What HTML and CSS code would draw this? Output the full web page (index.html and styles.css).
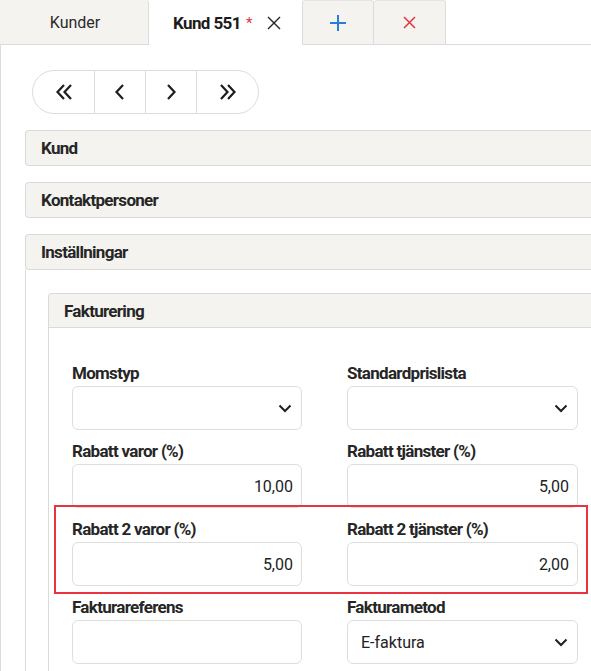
FILE: index.html
```html
<!DOCTYPE html>
<html lang="sv">
<head>
<meta charset="utf-8">
<title>Kund 551</title>
<link rel="stylesheet" href="styles.css">
</head>
<body>
<div class="tabs">
  <div class="tab tab-inactive tab-kunder">Kunder</div>
  <div class="tab tab-active">
    <span class="tab-title">Kund 551</span><span class="star">*</span>
    <svg class="tab-close" width="14" height="14" viewBox="0 0 14 14"><path d="M1 1L13 13M13 1L1 13" stroke="#222" stroke-width="1.4" fill="none"/></svg>
  </div>
  <div class="tab tab-inactive tab-icon">
    <svg width="18" height="18" viewBox="0 0 18 18"><path d="M9 1V17M1 9H17" stroke="#2b7bd8" stroke-width="2" fill="none"/></svg>
  </div>
  <div class="tab tab-inactive tab-icon">
    <svg width="13" height="13" viewBox="0 0 13 13"><path d="M1 1L12 12M12 1L1 12" stroke="#e5343c" stroke-width="1.5" fill="none"/></svg>
  </div>
  <div class="tab-fill"></div>
</div>

<div class="page">
  <div class="pager">
    <div class="pg pg-wide"><svg width="20" height="16" viewBox="0 0 20 16"><path d="M8 1L1.5 8L8 15M15 1L8.5 8L15 15" stroke="#1f1f1f" stroke-width="2.2" fill="none" stroke-linejoin="miter"/></svg></div>
    <div class="pg"><svg width="12" height="16" viewBox="0 0 12 16"><path d="M9 1L2.5 8L9 15" stroke="#1f1f1f" stroke-width="2.2" fill="none"/></svg></div>
    <div class="pg"><svg width="12" height="16" viewBox="0 0 12 16"><path d="M3 1L9.5 8L3 15" stroke="#1f1f1f" stroke-width="2.2" fill="none"/></svg></div>
    <div class="pg pg-wide"><svg width="20" height="16" viewBox="0 0 20 16"><path d="M5 1L11.5 8L5 15M12 1L18.5 8L12 15" stroke="#1f1f1f" stroke-width="2.2" fill="none"/></svg></div>
  </div>

  <div class="panel"><div class="panel-head">Kund</div></div>
  <div class="panel"><div class="panel-head">Kontaktpersoner</div></div>
  <div class="panel">
    <div class="panel-head">Inställningar</div>
    <div class="panel-body outer-body">
      <div class="panel inner">
        <div class="panel-head">Fakturering</div>
        <div class="panel-body inner-body">
          <div class="form-row">
            <div class="field">
              <div class="label">Momstyp</div>
              <div class="input select"><span></span><svg width="14" height="9" viewBox="0 0 14 9"><path d="M1.5 1.5L7 7L12.5 1.5" stroke="#1f1f1f" stroke-width="2" fill="none"/></svg></div>
            </div>
            <div class="field">
              <div class="label">Standardprislista</div>
              <div class="input select"><span></span><svg width="14" height="9" viewBox="0 0 14 9"><path d="M1.5 1.5L7 7L12.5 1.5" stroke="#1f1f1f" stroke-width="2" fill="none"/></svg></div>
            </div>
          </div>
          <div class="form-row">
            <div class="field">
              <div class="label">Rabatt varor (%)</div>
              <div class="input num">10,00</div>
            </div>
            <div class="field">
              <div class="label">Rabatt tjänster (%)</div>
              <div class="input num">5,00</div>
            </div>
          </div>
          <div class="form-row highlighted">
            <div class="field">
              <div class="label">Rabatt 2 varor (%)</div>
              <div class="input num">5,00</div>
            </div>
            <div class="field">
              <div class="label">Rabatt 2 tjänster (%)</div>
              <div class="input num">2,00</div>
            </div>
          </div>
          <div class="form-row">
            <div class="field">
              <div class="label">Fakturareferens</div>
              <div class="input"></div>
            </div>
            <div class="field">
              <div class="label">Fakturametod</div>
              <div class="input select"><span>E-faktura</span><svg width="14" height="9" viewBox="0 0 14 9"><path d="M1.5 1.5L7 7L12.5 1.5" stroke="#1f1f1f" stroke-width="2" fill="none"/></svg></div>
            </div>
          </div>
        </div>
      </div>
    </div>
  </div>
</div>
</body>
</html>
```

FILE: styles.css
```css
* { box-sizing: border-box; }
html, body { margin: 0; padding: 0; }
body {
  width: 591px;
  height: 671px;
  overflow: hidden;
  background: #fff;
  font-family: Roboto, "Noto Sans", sans-serif;
  color: #222;
}

.tabs {
  display: flex;
  height: 45px;
}
.tab {
  display: flex;
  align-items: center;
  justify-content: center;
  font-size: 16px;
}
.tab-inactive {
  background: #f4f3ef;
  border: 1px solid #dcdcdc;
  border-top-color: #e4e4e4;
  border-radius: 3px 3px 0 0;
}
.tab-kunder {
  width: 149px;
  border-left: none;
  border-top: none;
  border-radius: 0 3px 0 0;
  color: #2a2a2a;
  padding-left: 2px;
}
.tab-active {
  width: 153px;
  background: #fff;
  justify-content: flex-start;
  padding-left: 24px;
}
.tab-title { font-weight: 700; font-size: 17px; color: #1c1c1c; letter-spacing: -0.6px; }
.star { color: #e5343c; margin-left: 5px; font-size: 15px; }
.tab-close { margin-left: 15px; }
.tab-icon { width: 72px; }
.tab-icon + .tab-icon { width: 72px; border-left: none; }
.tab-fill { flex: 1; border-bottom: 1px solid #dcdcdc; }

.page {
  width: 660px;
  height: 630px;
  border-left: 1px solid #dcdcdc;
  padding: 25px 0 0 24px;
}

.pager {
  display: inline-flex;
  height: 44px;
  margin-left: 7px;
  border: 1px solid #dcdcdc;
  border-radius: 22px;
  overflow: hidden;
  margin-bottom: 16px;
}
.pg {
  width: 51px;
  display: flex;
  align-items: center;
  justify-content: center;
  border-left: 1px solid #dcdcdc;
}
.pg:first-child { border-left: none; width: 61px; padding-left: 4px; }
.pg:last-child { width: 62px; padding-right: 4px; }

.panel { margin-bottom: 16px; }
.panel-head {
  height: 36px;
  background: #f4f3ef;
  border: 1px solid #dadada;
  border-right: none;
  border-radius: 4px 0 0 4px;
  padding-left: 15px;
  display: flex;
  align-items: center;
  font-weight: 700;
  font-size: 17px;
  letter-spacing: -0.7px;
  color: #262626;
}
.panel-body {
  border-left: 1px solid #dadada;
}
.outer-body {
  height: 410px;
  padding: 23px 0 0 22px;
}
.outer-body .panel-head { border-radius: 4px 0 0 0; }
.panel.inner { margin-bottom: 0; }
.panel.inner .panel-head { height: 35px; }
.inner-body {
  height: 360px;
  padding: 35px 0 0 23px;
}

.form-row {
  display: grid;
  grid-template-columns: 230px 231px;
  column-gap: 45px;
  margin-bottom: 11px;
}
.highlighted { position: relative; }
.highlighted::after {
  content: "";
  position: absolute;
  top: -14px;
  left: -18px;
  width: 530px;
  bottom: -8px;
  border: 2px solid #e8343f;
  pointer-events: none;
}
.label {
  font-weight: 700;
  font-size: 17px;
  line-height: 20px;
  letter-spacing: -0.7px;
  color: #262626;
  margin-bottom: 3px;
  white-space: nowrap;
}
.input {
  height: 44px;
  border: 1px solid #dedede;
  border-radius: 6px;
  background: #fff;
  font-size: 16px;
  color: #222;
  display: flex;
  align-items: center;
  padding: 0 8px 0 13px;
}
.num { justify-content: flex-end; }
.select { justify-content: space-between; padding-right: 9px; }
```
